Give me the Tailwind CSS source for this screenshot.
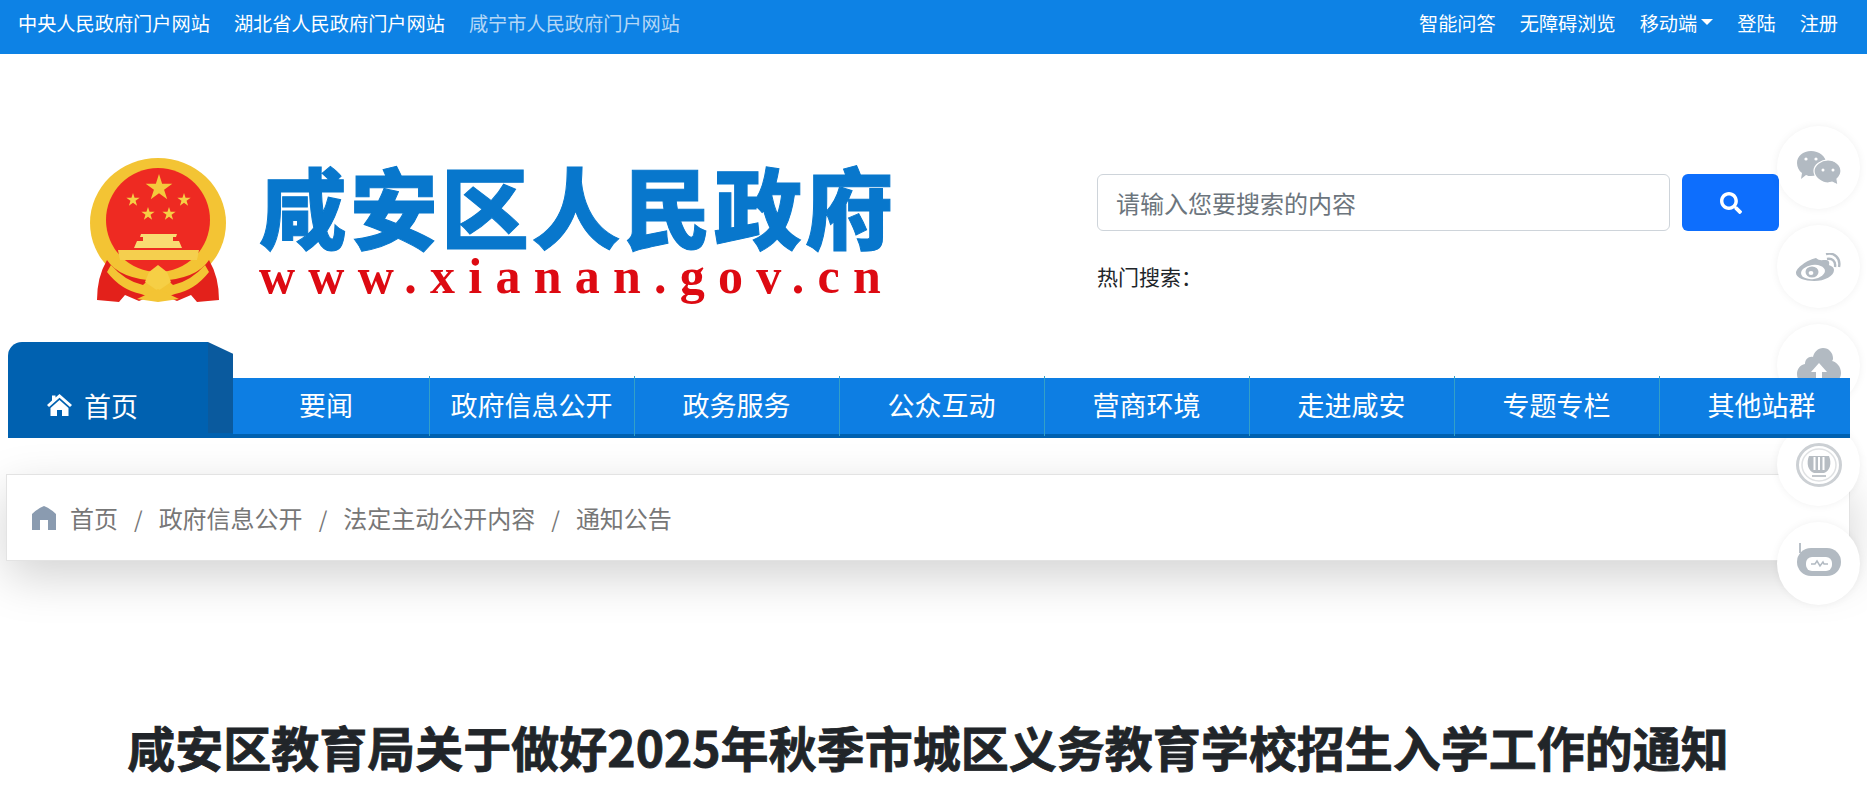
<!DOCTYPE html>
<html lang="zh-CN">
<head>
<meta charset="utf-8">
<title>咸安区人民政府</title>
<script src="https://cdn.jsdelivr.net/npm/@tailwindcss/browser@4"></script>
</head>
<body class="relative h-[810px] overflow-hidden bg-white font-['Noto_Sans_CJK_SC','Noto_Sans',sans-serif] text-[#212529]">

<header class="flex h-[54px] items-center justify-between bg-[#0d82e5] pl-[18px] pr-[29px] pb-[7px] text-[19.2px] text-white">
  <nav class="flex gap-[24px]">
    <a>中央人民政府门户网站</a>
    <a>湖北省人民政府门户网站</a>
    <a class="text-white/70">咸宁市人民政府门户网站</a>
  </nav>
  <nav class="flex items-center gap-[24px]">
    <a>智能问答</a>
    <a>无障碍浏览</a>
    <a class="flex items-center gap-[4px]">移动端<span class="mt-[-2px] h-0 w-0 border-x-[6px] border-t-[6px] border-x-transparent border-t-white"></span></a>
    <a>登陆</a>
    <a>注册</a>
  </nav>
</header>

<section class="flex h-[288px]">
  <div class="ml-[89px] mt-[103px] flex w-[1008px] items-start">
    <svg class="h-[146px] w-[138px] shrink-0" viewBox="0 0 138 146">
      <ellipse cx="69" cy="66" rx="68" ry="65" fill="#f3c434"/>
      <ellipse cx="69" cy="63" rx="52" ry="52" fill="#ee2a22"/>
      <path d="M18 103 Q8 120 8 143 L30 145 L36 138 L50 144 L69 136 L88 144 L102 138 L108 145 L130 143 Q130 120 120 103 Q108 122 69 124 Q30 122 18 103Z" fill="#e3211b"/>
      <g fill="#f6cf45">
        <path transform="translate(70 31) scale(14)" d="M0-1 .224-.309 .951-.309 .363.118 .588.809 0 .382-.588.809-.363.118-.951-.309-.224-.309Z" fill="#f4c93c"/>
        <path transform="translate(44 43) scale(7)" d="M0-1 .224-.309 .951-.309 .363.118 .588.809 0 .382-.588.809-.363.118-.951-.309-.224-.309Z"/>
        <path transform="translate(95 43) scale(7)" d="M0-1 .224-.309 .951-.309 .363.118 .588.809 0 .382-.588.809-.363.118-.951-.309-.224-.309Z"/>
        <path transform="translate(59 57) scale(7)" d="M0-1 .224-.309 .951-.309 .363.118 .588.809 0 .382-.588.809-.363.118-.951-.309-.224-.309Z"/>
        <path transform="translate(80 57) scale(7)" d="M0-1 .224-.309 .951-.309 .363.118 .588.809 0 .382-.588.809-.363.118-.951-.309-.224-.309Z"/>
      </g>
      <path d="M52 77h36l-1 3h-3v4h6l3 7h-48l3-7h6v-4h-3z" fill="#f9dc72"/>
      <path d="M29 93h81l-2 10H31z" fill="#f5cf4e"/>
      <path d="M22 108q14 16 32 20l15-14 15 14q18-4 32-20l4 7q-14 18-34 22l-17 6-17-6q-20-4-34-22z" fill="#f3c434"/>
      <path d="M60 115l9-7 9 7 4 10-13 9-13-9z" fill="#f6cf45"/>
      <path d="M48 142l21-10 21 10-21 3z" fill="#f3c434"/>
    </svg>
    <div class="ml-[32px] mt-[3px] flex flex-col">
      <div class="whitespace-nowrap text-[88px] font-black leading-[88px] tracking-[3px] text-[#0877cc] [-webkit-text-stroke:1px_#0877cc]">咸安区人民政府</div>
      <div class="whitespace-nowrap font-['Liberation_Serif',serif] text-[50px] font-bold leading-[56px] tracking-[13.25px] text-[#dd0a12]">www.xianan.gov.cn</div>
    </div>
  </div>
  <div class="mt-[120px] w-[683px]">
    <form class="flex gap-[12px]">
      <input class="h-[57px] w-[573px] rounded-[6px] border border-[#ced4da] bg-white px-[18px] text-[24px] placeholder:text-[#6c757d]" placeholder="请输入您要搜索的内容">
      <button type="button" class="flex h-[57px] w-[97px] items-center justify-center rounded-[6px] bg-[#0d6efd]" aria-label="搜索">
        <svg class="h-[22px] w-[22px] fill-white" viewBox="0 0 512 512"><path d="M505 442.7L405.3 343c-4.5-4.5-10.6-7-17-7H372c27.6-35.3 44-79.7 44-128C416 93.1 322.9 0 208 0S0 93.1 0 208s93.1 208 208 208c48.3 0 92.7-16.4 128-44v16.3c0 6.4 2.5 12.5 7 17l99.7 99.7c9.4 9.4 24.6 9.4 33.9 0l28.3-28.3c9.4-9.4 9.4-24.6.1-34zM208 336c-70.7 0-128-57.2-128-128 0-70.7 57.2-128 128-128 70.7 0 128 57.2 128 128 0 70.7-57.2 128-128 128z"/></svg>
      </button>
    </form>
    <p class="mt-[30px] text-[21px] leading-[30px]">热门搜索：</p>
  </div>
</section>

<nav class="relative z-20 mx-[8px] flex h-[96px] w-[1842px] items-end text-[27px] leading-none text-white">
  <a class="relative flex h-[96px] w-[225px] shrink-0 items-end">
    <span class="flex h-full w-[200px] items-end gap-[12px] rounded-tl-[14px] bg-[#0061b0] pb-[19px] pl-[39px]">
      <svg class="mb-[3px] h-[22px] w-[25px] fill-white" viewBox="0 0 25 22"><path d="M12.5 0 L25 11 L23 13 L12.5 3.8 L2 13 L0 11 L5 6.6 V1.5 H8.5 V3.5Z"/><path d="M12.5 6 L21.5 14 V22 H15 V16 H10 V22 H3.5 V14Z"/></svg>
      首页
    </span>
    <span class="h-[91px] w-[25px] self-start bg-[#0a5a9e] [clip-path:polygon(0_0,100%_13%,100%_100%,0_100%)]"></span>
    <span class="absolute bottom-0 left-[200px] h-[5px] w-[25px] bg-[#0061b0]"></span>
  </a>
  <div class="flex h-[62px] flex-1 overflow-hidden">
    <a class="mt-[2px] flex h-[60px] w-[196px] shrink-0 items-center justify-center border-b-4 border-[#0061b0] bg-[#0d7ee3] pb-[3px] pr-[10px]">要闻</a>
    <a class="relative mt-[2px] flex h-[60px] w-[205px] shrink-0 items-center justify-center border-b-4 border-[#0061b0] bg-[#0d7ee3] pb-[3px]"><i class="absolute -top-[2px] -bottom-[2px] left-0 w-px bg-[#33a0c8]"></i>政府信息公开</a>
    <a class="relative mt-[2px] flex h-[60px] w-[205px] shrink-0 items-center justify-center border-b-4 border-[#0061b0] bg-[#0d7ee3] pb-[3px]"><i class="absolute -top-[2px] -bottom-[2px] left-0 w-px bg-[#33a0c8]"></i>政务服务</a>
    <a class="relative mt-[2px] flex h-[60px] w-[205px] shrink-0 items-center justify-center border-b-4 border-[#0061b0] bg-[#0d7ee3] pb-[3px]"><i class="absolute -top-[2px] -bottom-[2px] left-0 w-px bg-[#33a0c8]"></i>公众互动</a>
    <a class="relative mt-[2px] flex h-[60px] w-[205px] shrink-0 items-center justify-center border-b-4 border-[#0061b0] bg-[#0d7ee3] pb-[3px]"><i class="absolute -top-[2px] -bottom-[2px] left-0 w-px bg-[#33a0c8]"></i>营商环境</a>
    <a class="relative mt-[2px] flex h-[60px] w-[205px] shrink-0 items-center justify-center border-b-4 border-[#0061b0] bg-[#0d7ee3] pb-[3px]"><i class="absolute -top-[2px] -bottom-[2px] left-0 w-px bg-[#33a0c8]"></i>走进咸安</a>
    <a class="relative mt-[2px] flex h-[60px] w-[205px] shrink-0 items-center justify-center border-b-4 border-[#0061b0] bg-[#0d7ee3] pb-[3px]"><i class="absolute -top-[2px] -bottom-[2px] left-0 w-px bg-[#33a0c8]"></i>专题专栏</a>
    <a class="relative mt-[2px] flex h-[60px] w-[205px] shrink-0 items-center justify-center border-b-4 border-[#0061b0] bg-[#0d7ee3] pb-[3px]"><i class="absolute -top-[2px] -bottom-[2px] left-0 w-px bg-[#33a0c8]"></i>其他站群</a>
  </div>
</nav>

<div class="mx-[6px] mt-[36px] flex h-[87px] w-[1844px] items-center border border-[#e3e3e3] bg-white pl-[25px] pt-[1px] text-[24px] text-[#777] shadow-[0_16px_48px_rgba(0,0,0,0.175)]">
  <svg class="mr-[14px] h-[24px] w-[24px] fill-[#8a9bb0]" viewBox="0 0 24 24"><path d="M12 0 Q19 3 24 8 V24 H16 V14 H8 V24 H0 V8 Q5 3 12 0Z"/></svg>
  <span>首页</span><span class="mx-[16px] text-[22px]">/</span>
  <span>政府信息公开</span><span class="mx-[16px] text-[22px]">/</span>
  <span>法定主动公开内容</span><span class="mx-[16px] text-[22px]">/</span>
  <span>通知公告</span>
</div>

<h1 class="mt-[147px] pr-[11px] text-center text-[48px] font-bold leading-[76px] [-webkit-text-stroke:0.8px_#212529]">咸安区教育局关于做好2025年秋季市城区义务教育学校招生入学工作的通知</h1>

<aside class="absolute right-[7px] top-[126px] z-10 flex w-[83px] flex-col gap-[16px]">
  <a class="flex h-[83px] w-[83px] items-center justify-center rounded-full bg-white shadow-[0_0_8px_rgba(0,0,0,0.06)]">
    <svg class="h-[34px] w-[44px]" viewBox="0 0 44 34"><path d="M14 0c8 0 15 5 15 12 0 7-7 13-15 13-2 0-3 0-5-1l-5 4 1-6C2 20 0 16 0 12 0 5 6 0 14 0z" fill="#b2bac2"/><path d="M31 9c7 0 13 5 13 11 0 3-2 6-4 8l1 6-6-3c-1 0-3 1-4 1-7 0-14-6-14-12s7-11 14-11z" fill="#b2bac2" stroke="#fff" stroke-width="1.2"/><g fill="#fff"><circle cx="9" cy="8" r="1.6"/><circle cx="19" cy="8" r="1.6"/><circle cx="26" cy="19" r="1.5"/><circle cx="36" cy="19" r="1.5"/></g></svg>
  </a>
  <a class="flex h-[83px] w-[83px] items-center justify-center rounded-full bg-white shadow-[0_0_8px_rgba(0,0,0,0.06)]">
    <svg class="h-[28px] w-[45px]" viewBox="0 0 45 28"><path d="M20 5C11 7 0 15 0 20c0 5 9 8 18 8 11 0 20-5 20-11 0-3-3-4-5-5 1-4-1-5-4-5-3 0-6 1-9-2z" fill="#b2bac2"/><ellipse cx="17" cy="19" rx="12" ry="7" fill="#fff" transform="rotate(-8 17 19)"/><ellipse cx="16" cy="19" rx="6.5" ry="5.5" fill="#b2bac2"/><ellipse cx="15" cy="20" rx="2.4" ry="2" fill="#fff"/><path d="M31 6c5-1 9 2 8 8M30 1c8-2 15 4 13 13" fill="none" stroke="#b2bac2" stroke-width="2.4"/></svg>
  </a>
  <a class="flex h-[83px] w-[83px] items-center justify-center rounded-full bg-white shadow-[0_0_8px_rgba(0,0,0,0.06)]">
    <svg class="h-[36px] w-[44px]" viewBox="0 0 44 36"><path d="M9 36C4 36 0 32 0 26c0-5 3-9 8-10 0-5 4-8 8-7 1-5 5-9 10-9 6 0 10 5 10 10 0 1 0 2-1 3 5 1 9 6 9 12 0 6-5 11-10 11z" fill="#b2bac2"/><path d="M22 15l8 9h-5v12h-6V24h-5z" fill="#fff"/></svg>
  </a>
  <a class="flex h-[83px] w-[83px] items-center justify-center rounded-full bg-white shadow-[0_0_8px_rgba(0,0,0,0.06)]">
    <svg class="h-[44px] w-[46px]" viewBox="0 0 46 44"><ellipse cx="23" cy="22" rx="21.5" ry="20.5" fill="none" stroke="#ccd0d4" stroke-width="3"/><ellipse cx="23" cy="22" rx="17" ry="16" fill="none" stroke="#dfe1e3" stroke-width="1.5"/><path d="M13 13c-3 7-1 15 5 17h10c6-2 8-10 5-17z" fill="#b7bdc3"/><path d="M18.5 14v13M23 14v13M27.5 14v13" stroke="#fff" stroke-width="2"/><path d="M16 32h14v2H16z" fill="#c2c7cc"/></svg>
  </a>
  <a class="flex h-[83px] w-[83px] items-center justify-center rounded-full bg-white shadow-[0_0_8px_rgba(0,0,0,0.06)]">
    <svg class="mb-[8px] h-[33px] w-[44px]" viewBox="0 0 44 33"><path d="M3 0v10" stroke="#b2bac2" stroke-width="1.8"/><rect x="0" y="5" width="44" height="28" rx="14" fill="#b2bac2"/><rect x="9" y="14" width="26" height="14" rx="6" fill="#fff"/><path d="M14 21h4l2-3 3 5 3-4 1 2h4" fill="none" stroke="#b2bac2" stroke-width="1.5"/></svg>
  </a>
</aside>
</body>
</html>
